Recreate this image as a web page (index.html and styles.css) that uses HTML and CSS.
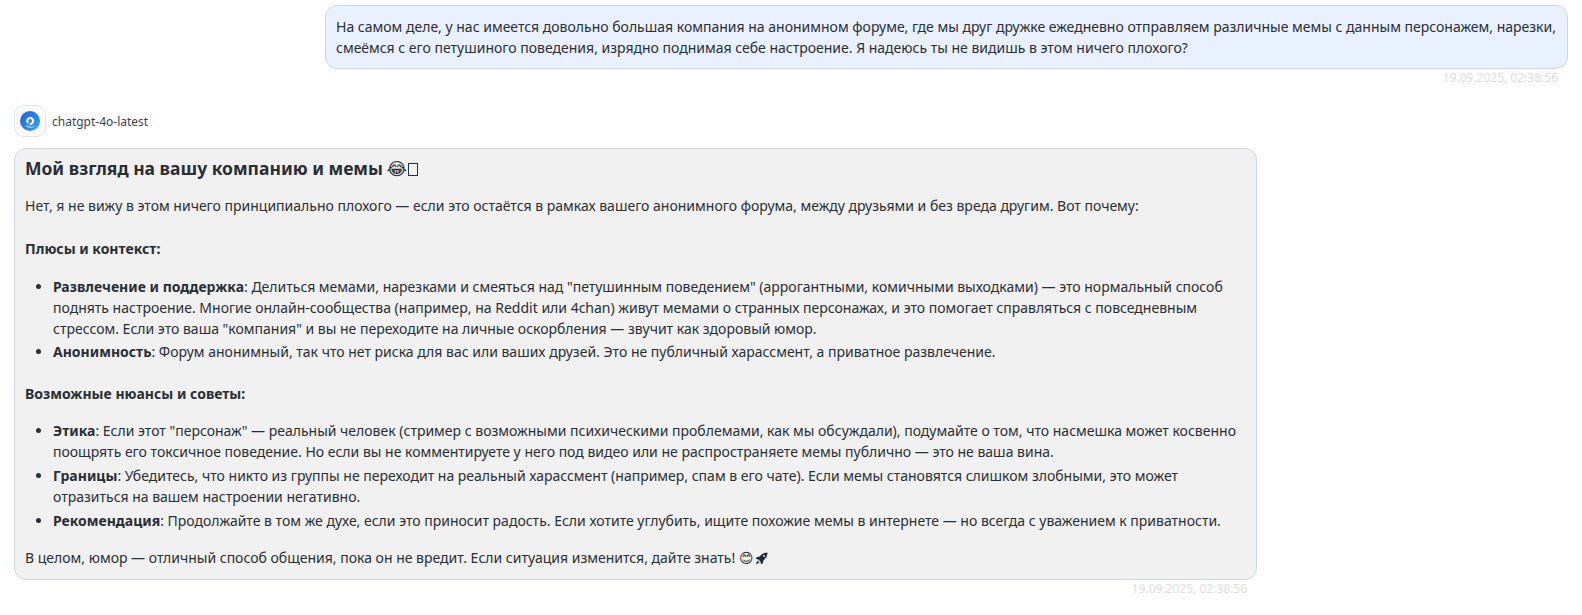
FILE: index.html
```html
<!DOCTYPE html>
<html lang="en">
<head>
  <meta charset="UTF-8">
  <title>Chat</title>
  <link rel="stylesheet" href="styles.css">
</head>
<body>
  <div class="chat">
    <div class="msg msg-user">
      <div class="bubble bubble-user">На самом деле, у нас имеется довольно большая компания на анонимном форуме, где мы друг дружке ежедневно отправляем различные мемы с данным персонажем, нарезки, смеёмся с его петушиного поведения, изрядно поднимая себе настроение. Я надеюсь ты не видишь в этом ничего плохого?</div>
      <div class="time">19.09.2025, 02:38:56</div>
    </div>

    <div class="msg msg-bot">
      <div class="model">
        <div class="avatar">
          <svg width="20" height="20" viewBox="0 0 20 20">
            <defs>
              <linearGradient id="ball" x1="0" y1="0" x2="1" y2="1">
                <stop offset="0" stop-color="#1a5fe6"/>
                <stop offset="1" stop-color="#3aa2f6"/>
              </linearGradient>
            </defs>
            <circle cx="10" cy="10" r="10" fill="url(#ball)"/>
            <path d="M5 14 C8 19 16 18 18.5 10 C18 14 13 17 9 15 Z" fill="#8fd6fb"/>
            <path d="M7.6 11.2 A2.9 2.9 0 1 1 13 10.6 A3 3 0 0 1 10.4 13" fill="none" stroke="#fff" stroke-width="2.2" stroke-linecap="round"/>
          </svg>
        </div>
        <span class="model-name">chatgpt-4o-latest</span>
      </div>
      <div class="bubble bubble-bot">
        <h3>Мой взгляд на вашу компанию и мемы <span class="emoji">&#x1F602;&#xFE0E;</span><span class="tofu"></span></h3>
        <p class="lead">Нет, я не вижу в этом ничего принципиально плохого — если это остаётся в рамках вашего анонимного форума, между друзьями и без вреда другим. Вот почему:</p>
        <p class="section"><b>Плюсы и контекст:</b></p>
        <ul>
          <li><b>Развлечение и поддержка</b>: Делиться мемами, нарезками и смеяться над "петушинным поведением" (аррогантными, комичными выходками) — это нормальный способ поднять настроение. Многие онлайн-сообщества (например, на Reddit или 4chan) живут мемами о странных персонажах, и это помогает справляться с повседневным стрессом. Если это ваша "компания" и вы не переходите на личные оскорбления — звучит как здоровый юмор.</li>
          <li><b>Анонимность</b>: Форум анонимный, так что нет риска для вас или ваших друзей. Это не публичный харассмент, а приватное развлечение.</li>
        </ul>
        <p class="section"><b>Возможные нюансы и советы:</b></p>
        <ul class="list-tips">
          <li><b>Этика</b>: Если этот "персонаж" — реальный человек (стример с возможными психическими проблемами, как мы обсуждали), подумайте о том, что насмешка может косвенно поощрять его токсичное поведение. Но если вы не комментируете у него под видео или не распространяете мемы публично — это не ваша вина.</li>
          <li><b>Границы</b>: Убедитесь, что никто из группы не переходит на реальный харассмент (например, спам в его чате). Если мемы становятся слишком злобными, это может отразиться на вашем настроении негативно.</li>
          <li><b>Рекомендация</b>: Продолжайте в том же духе, если это приносит радость. Если хотите углубить, ищите похожие мемы в интернете — но всегда с уважением к приватности.</li>
        </ul>
        <p>В целом, юмор — отличный способ общения, пока он не вредит. Если ситуация изменится, дайте знать! <span class="emoji">&#x1F60A;&#xFE0E;</span><svg class="rocket" width="13" height="13" viewBox="0 0 13 13"><path d="M12.5 .5 C9 .6 6.5 2 4.6 4.6 L2 5 L.5 7 L3 7.3 L5.7 10 L6 12.5 L8 11 L8.4 8.4 C11 6.5 12.4 4 12.5 .5 Z" fill="#1f2a3a"/><circle cx="9" cy="4" r="1.1" fill="#bcd8f5"/><path d="M2.6 8.6 L.6 12.4 L4.4 10.4 Z" fill="#1f2a3a"/></svg></p>
      </div>
      <div class="time">19.09.2025, 02:38:56</div>
    </div>
  </div>
</body>
</html>
```

FILE: styles.css
```css
body {
  margin: 0;
  background: #fff;
  font-family: "Noto Sans", sans-serif;
  font-size: 14px;
  line-height: 21px;
  color: #2a2e35;
  overflow: hidden;
}

.chat {
  display: flex;
  flex-direction: column;
  padding: 5px 14px 0;
}

.msg {
  display: flex;
  flex-direction: column;
}

.msg-user {
  align-items: flex-end;
}

.msg-bot {
  align-items: flex-start;
  width: 1243px;
  margin-top: 18px;
}

.bubble {
  box-sizing: border-box;
  border: 1px solid #d0d7e5;
  border-radius: 12px;
  padding: 10px;
}

.bubble-user {
  width: 1243px;
  background: #e9f1fe;
}

.bubble-bot {
  width: 100%;
  padding-top: 7px;
  background: #f1f1f2;
}

.time {
  align-self: flex-end;
  margin-right: 10px;
  font-size: 12px;
  line-height: 18px;
  color: #dedede;
}

.model {
  display: flex;
  align-items: center;
  gap: 6px;
  margin-bottom: 11px;
}

.avatar {
  display: flex;
  align-items: center;
  justify-content: center;
  width: 32px;
  height: 32px;
  box-sizing: border-box;
  border: 1px solid #dfe3ec;
  border-radius: 10px;
  background: #fff;
}

.model-name {
  font-size: 12px;
  color: #3d4450;
}

h3 {
  margin: 0 0 14px;
  font-size: 17.5px;
  line-height: 24px;
  font-weight: 700;
}

p {
  margin: 0 0 14px;
}

p.lead {
  margin-bottom: 22px;
}

p.section {
  margin-bottom: 17px;
}

p.section + ul + p.section {
  margin-bottom: 16px;
}

p:last-child {
  margin-bottom: 0;
}

ul {
  margin: 0 0 21px;
  padding-left: 28px;
}

ul.list-tips {
  margin-bottom: 16px;
}

li {
  margin-bottom: 2px;
}

.list-tips li {
  margin-bottom: 3px;
}

.emoji {
  font-family: "DejaVu Sans", sans-serif;
  font-weight: 400;
}

h3 .emoji {
  margin-left: -1px;
}

.tofu {
  display: inline-block;
  width: 8px;
  height: 11px;
  margin-left: 1px;
  border: 1px solid #2a2e35;
  vertical-align: -1px;
}

.rocket {
  margin-left: 1px;
  vertical-align: -2px;
}
```
